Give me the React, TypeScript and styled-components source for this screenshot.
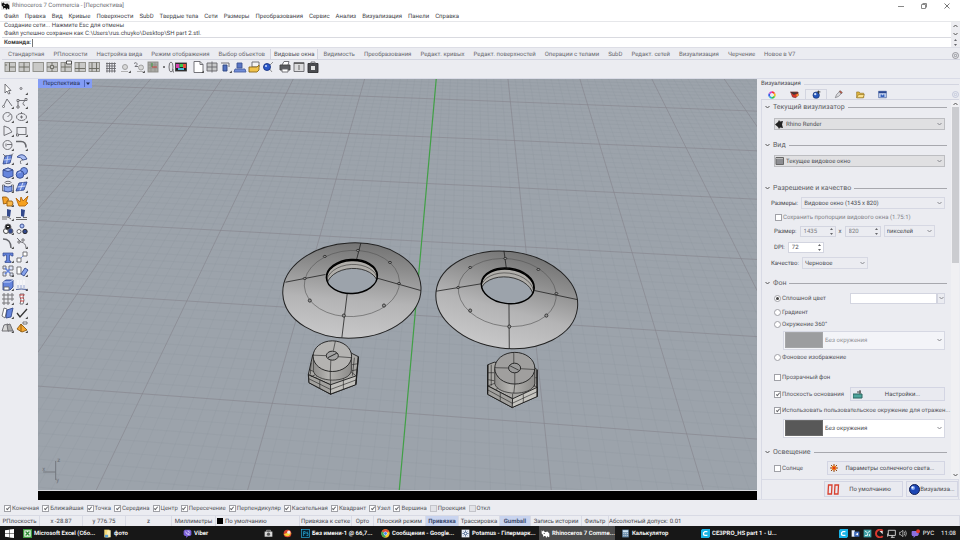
import React from "react";
import styled, { createGlobalStyle, css } from "styled-components";

const Global = createGlobalStyle`
  *, *::before, *::after { box-sizing: border-box; }
  body { margin: 0; background: #ebecf1; text-rendering: geometricPrecision; }
  body, button, input, select {
    font-family: Roboto, "Open Sans", sans-serif;
    font-size: 6px;
    line-height: 9px;
    color: #45464c;
  }
  button, input, select { margin: 0; padding: 0; border: 0; background: none; border-radius: 0; min-width: 0; text-rendering: inherit; }
  svg { display: block; flex: none; }
`;

/* ---------- frame ---------- */

const Page = styled.div`
  display: flex;
  flex-direction: column;
  min-height: 100vh;
  background: #ebecf1;
  white-space: nowrap;
  overflow: hidden;
`;

const TitleBar = styled.header`
  display: flex;
  align-items: center;
  height: 11px;
  padding: 0 8px 0 1px;
  gap: 2px;
  background: #fff;
  color: #6c6d72;
`;

const WindowButtons = styled.div`
  display: flex;
  gap: 13px;
  margin-left: auto;
`;

const WindowButton = styled.button`
  display: grid;
  place-items: center;
  width: 10px;
  height: 10px;
`;

const MenuBar = styled.nav`
  display: flex;
  align-items: center;
  height: 11px;
  padding: 0 4px;
  gap: 6px;
  background: #fff;
  border-bottom: 1px solid #e6e7ea;
`;

const MenuItem = styled.button`
  color: #404146;
`;

const CommandArea = styled.section`
  display: grid;
  grid-template-columns: 1fr 9px;
  background: #fff;
  border-bottom: 1px solid #dddee6;
  padding-left: 2px;
`;

const History = styled.div`
  height: 16px;
  padding-left: 2px;
  line-height: 8px;
  border-bottom: 1px solid #d9dae0;
`;

const CommandLine = styled.label`
  display: flex;
  align-items: center;
  height: 9px;
  padding-left: 2px;
  font-weight: 700;
  color: #444;
`;

const CommandInput = styled.input`
  flex: 1;
  height: 8px;
  margin-left: 1px;
  border-left: 1px solid #777;
  outline: none;
`;

const ArrowStack = styled.div`
  display: flex;
  flex-direction: column;
  justify-content: space-around;
  align-items: center;
  background: #ededf1;
`;

const TabStrip = styled.nav`
  display: flex;
  align-items: flex-end;
  height: 12px;
  margin-left: 2px;
  padding: 0 1px 0 6px;
  border-bottom: 1px solid #d3d5e0;
`;

const ToolTab = styled.button<{ $active?: boolean }>`
  height: 10px;
  margin-right: 9px;
  color: #66676d;
  ${(p) =>
    p.$active &&
    css`
      color: #4c4d53;
      background: #f1f1f5;
      box-shadow: -3px 0 #f1f1f5, 3px 0 #f1f1f5, 4px 0 #d3d5e0, -4px 0 #d3d5e0;
    `}
`;

const GearButton = styled.button`
  margin-left: auto;
`;

const Toolbar = styled.div`
  display: flex;
  align-items: flex-start;
  height: 19px;
  padding: 0 3px;
  border-bottom: 1px solid #d9dbe6;
`;

const ToolGroup = styled.div`
  display: flex;
  & + & {
    margin-left: 3px;
  }
`;

const ToolButton = styled.button<{ $narrow?: boolean }>`
  display: grid;
  place-content: center;
  overflow: hidden;
  width: ${(p) => (p.$narrow ? 7 : 14)}px;
  height: 14px;
`;

const Workspace = styled.main`
  display: flex;
  flex: 1;
`;

const SideTools = styled.aside`
  display: grid;
  grid-template-columns: 14px 14px;
  grid-auto-rows: 14px;
  align-content: start;
  width: 38px;
  padding: 3px 1px;
`;

const ViewportFrame = styled.section`
  position: relative;
  display: flex;
  flex-direction: column;
  flex: 1;
  min-width: 0;
  background: #000;
  margin-bottom: 1px;
`;

const Scene = styled.svg`
  width: 100%;
  flex: 1;
  min-height: 0;
  height: 410px;
  background: #9ca3ab;
  border-bottom: 1px solid #d8dade;
`;

const BlackStrip = styled.div`
  height: 9px;
  background: #000;
`;

const ViewportTab = styled.button`
  position: absolute;
  top: 0;
  left: 0;
  display: flex;
  align-items: center;
  gap: 4px;
  height: 9px;
  padding: 0 2px 0 5px;
  background: #839cf5;
  color: #27304f;
`;

/* ---------- properties panel ---------- */

const Panel = styled.aside`
  display: flex;
  flex-direction: column;
  width: 203px;
  padding: 0 1px 0 4px;
  margin-bottom: 1px;
  border-bottom: 1px solid #dcdee8;
`;

const PanelTitle = styled.h2`
  display: flex;
  align-items: center;
  gap: 3px;
  margin: 0;
  font-size: 6px;
  font-weight: 400;
  line-height: 10px;
  &::after {
    content: "";
    flex: 1;
    border-top: 1px solid #d3d5e0;
  }
`;

const PanelTabs = styled.nav`
  display: flex;
  height: 11px;
  border-bottom: 1px solid #d3d5e0;
`;

const PanelTab = styled.button<{ $active?: boolean }>`
  display: grid;
  place-items: center;
  width: 22px;
  border: 1px solid ${(p) => (p.$active ? "#d3d5e0" : "transparent")};
  border-bottom: 0;
`;

const PanelBody = styled.div`
  display: flex;
  border-left: 1px solid #d8dae5;
`;

const Form = styled.form`
  flex: 1;
  min-width: 0;
  padding: 0 4px 0 3px;
  height: 379px;
  overflow: hidden;
`;

const Section = styled.h3<{ $gap?: number }>`
  display: flex;
  align-items: center;
  gap: 3px;
  height: 14px;
  margin: ${(p) => p.$gap ?? 0}px 0 0;
  font-size: 7px;
  font-weight: 400;
  color: #5c5d63;
  &::after {
    content: "";
    flex: 1;
    border-top: 1px solid #a7a8ae;
  }
`;

const Row = styled.div<{ $h?: number; $indent?: number; $gap?: number }>`
  display: flex;
  align-items: center;
  gap: 3px;
  height: ${(p) => p.$h ?? 16}px;
  margin-top: ${(p) => p.$gap ?? 0}px;
  padding-left: ${(p) => p.$indent ?? 9}px;
  padding-right: 2px;
`;

const SelectBox = styled.span<{ $tone?: "grey" | "white" | "dim"; $w?: number; $tall?: boolean }>`
  display: grid;
  align-items: center;
  flex: ${(p) => (p.$w ? `0 0 ${p.$w}px` : "1")};
  min-width: 0;
  height: ${(p) => (p.$tall ? 19 : 12)}px;
  border: 1px solid ${(p) => (p.$tone === "grey" ? "#bcbdc1" : "#d6d8e3")};
  background: ${(p) =>
    p.$tone === "grey" ? "#e0e0e2" : p.$tone === "white" ? "#fff" : p.$tone === "dim" ? "#f3f4f8" : "#ebecf1"};
  color: ${(p) => (p.$tone === "dim" ? "#909197" : "#4c4d53")};
  & > * {
    grid-row: 1;
    grid-column: 1;
  }
  & > svg:last-child {
    justify-self: end;
    margin-right: 2px;
    pointer-events: none;
  }
`;

const NativeSelect = styled.select<{ $pad?: number }>`
  appearance: none;
  width: 100%;
  height: 100%;
  padding-left: ${(p) => p.$pad ?? 2}px;
  color: inherit;
  opacity: 1;
  outline: none;
`;

const Swatch = styled.span<{ $dark?: boolean }>`
  width: 38px;
  height: 16px;
  margin-left: 1px;
  background: ${(p) => (p.$dark ? "#585858" : "#9c9d9f")};
  border: 1px solid ${(p) => (p.$dark ? "#6a6a6a" : "#a5a6a8")};
`;

const Spin = styled.span<{ $white?: boolean }>`
  display: flex;
  align-items: center;
  width: 36px;
  min-width: 0;
  height: 11px;
  padding-right: 1px;
  border: 1px solid #d3d5e0;
  background: ${(p) => (p.$white ? "#fff" : "#ebecf1")};
  color: ${(p) => (p.$white ? "#4c4d53" : "#7b7c82")};
  input {
    flex: 1;
    width: 20px;
    height: 9px;
    padding-left: 3px;
    color: inherit;
    outline: none;
  }
`;

const ColorField = styled.input`
  flex: 1;
  height: 11px;
  background: #fff;
  border: 1px solid #d3d5e0;
  outline: none;
`;

const ColorArrow = styled.button`
  display: grid;
  place-items: center;
  width: 8px;
  height: 11px;
  margin-left: -3px;
  border: 1px solid #d3d5e0;
`;

const Choice = styled.label<{ $muted?: boolean; $w?: number }>`
  display: flex;
  align-items: center;
  gap: 1px;
  flex: 0 0 ${(p) => (p.$w ? `${p.$w}px` : "auto")};
  color: ${(p) => (p.$muted ? "#818288" : "#54555b")};
`;

const Tick = styled.input`
  appearance: none;
  display: grid;
  place-items: center;
  flex: none;
  width: 7px;
  height: 7px;
  background: #fff;
  border: 1px solid #a0a1a7;
  &:checked::after {
    content: "";
    width: 2px;
    height: 4px;
    border: solid #66676c;
    border-width: 0 1px 1px 0;
    transform: rotate(40deg);
  }
  &:disabled {
    background: #e2e3e8;
    border-color: #c3c4ca;
  }
  &[type="radio"] {
    border-radius: 50%;
  }
  &[type="radio"]:checked::after {
    width: 3px;
    height: 3px;
    border: 0;
    border-radius: 50%;
    background: #444;
    transform: none;
  }
`;

const PushButton = styled.button<{ $w?: number; $h?: number }>`
  display: flex;
  align-items: center;
  flex: ${(p) => (p.$w ? `0 0 ${p.$w}px` : "1")};
  height: ${(p) => p.$h ?? 14}px;
  padding: 0 2px;
  border: 1px solid #d3d5e3;
  background: #e9eaf0;
  span {
    flex: 1;
    text-align: center;
  }
`;

const Scrollbar = styled.div`
  display: flex;
  flex-direction: column;
  align-items: center;
  width: 8px;
  padding: 2px 0;
  background: #f0f0f3;
  button:last-child {
    margin-top: auto;
  }
`;

const Thumb = styled.div`
  width: 7px;
  height: 156px;
  margin-top: 1px;
  background: #cbccd0;
`;

const PanelFooter = styled.footer`
  display: flex;
  justify-content: flex-end;
  gap: 3px;
  padding: 1px 0 2px;
  border: 1px solid #d8dae5;
  border-bottom: 0;
`;

/* ---------- bottom bars ---------- */

const SnapBar = styled.div`
  display: flex;
  align-items: center;
  gap: 3px;
  height: 15px;
  padding-left: 4px;
  border-bottom: 1px solid #d8dae4;
`;

const StatusBar = styled.div`
  display: grid;
  grid-template-columns: 40px 43px 43px 46px 44px 84px 52px 22px 52px 33px 41px 31px 51px 27px 1fr;
  height: 10px;
`;

const StatusCell = styled.span<{ $on?: boolean; $start?: boolean }>`
  display: flex;
  align-items: center;
  justify-content: ${(p) => (p.$start ? "flex-start" : "center")};
  border-right: 1px solid #d8dae4;
  ${(p) =>
    p.$on &&
    css`
      background: #c9d4ef;
      font-weight: 700;
      color: #3c4a6e;
    `}
`;

const LayerChip = styled.i`
  width: 6px;
  height: 6px;
  margin: 0 2px 0 1px;
  background: #000;
`;

const Taskbar = styled.footer`
  display: flex;
  align-items: stretch;
  height: 15px;
  background: #171717;
`;

const TaskApps = styled.div`
  display: flex;
  gap: 4px;
  padding-left: 3px;
`;

const StartButton = styled.button`
  display: grid;
  place-items: center;
  width: 18px;
`;

const TaskButton = styled.button<{ $active?: boolean; $icon?: boolean }>`
  display: flex;
  align-items: center;
  justify-content: ${(p) => (p.$icon ? "center" : "flex-start")};
  gap: 2px;
  width: ${(p) => (p.$icon ? 15 : 76)}px;
  padding: 0 2px;
  color: #fff;
  font-weight: 600;
  border-bottom: 1px solid ${(p) => (p.$icon ? "transparent" : "#85888d")};
  background: ${(p) => (p.$active ? "#4b4b4b" : "transparent")};
`;

const Tray = styled.div`
  display: flex;
  align-items: center;
  gap: 3px;
  margin-left: auto;
  padding-right: 4px;
  color: #fff;
`;

const Clock = styled.time`
  padding-left: 4px;
`;

/* ---------- drawings ---------- */

const Ico = ({ s = 14, children }: { s?: number; children: React.ReactNode }) => (
  <svg width={s} height={s} viewBox="0 0 14 14" fill="none" stroke="#66676c" strokeWidth=".9">
    {children}
  </svg>
);

const Chevron = ({ up = false, dark = false }: { up?: boolean; dark?: boolean }) => (
  <svg width="5" height="4" viewBox="0 0 5 4" fill="none" stroke={dark ? "#555" : "#88898f"}>
    <path d={up ? "M.5 3 2.5 1l2 2" : "M.5 1l2 2 2-2"} />
  </svg>
);

const SpinArrows = () => (
  <svg width="5" height="9" viewBox="0 0 5 9" fill="#66676c">
    <path d="M1 3 2.500 1 4 3ZM1 6l1.500 2L4 6Z" />
  </svg>
);

const Gear = ({ c = "#808188" }: { c?: string }) => (
  <svg width="7" height="7" viewBox="0 0 7 7" fill="none" stroke={c} strokeWidth=".8">
    <circle cx="3.500" cy="3.500" r="3" />
    <circle cx="3.500" cy="3.500" r="1.200" />
  </svg>
);

const corner = <path d="M12.800 10.500v2.500h-2.500z" fill="#444" stroke="none" />;

const Pane = ({ d, extra }: { d?: string; extra?: React.ReactNode }) => (
  <Ico>
    <rect x="2" y="2.500" width="10.500" height="9" fill="#c9c9c7" stroke="#8a8a85" />
    {d && <path d={d} stroke="#66665f" />}
    {extra}
  </Ico>
);

const toolGroups: { narrow?: boolean; label: string; icon: React.ReactNode }[][] = [
  [
    { label: "Четыре вида", icon: <Pane d="M6.500 2.500v9M6.500 7H12M2 5h2" /> },
    { label: "Разделить", icon: <Pane d="M7 2.500v9M2 7h10" /> },
    { label: "Развернуть", icon: <Pane /> },
    { label: "Центр", icon: <Pane d="M7 2.500v2.500M7 9v2.500M2 7h3M9 7h3M5.500 5.500h3v3h-3z" /> },
    { label: "Новый вид", icon: <Pane d="M6 2.500v9M2 7h10" extra={<path d="M7.500 1h5v3h-5z" fill="#fff" stroke="#444" />} /> },
    { label: "Разделить по горизонтали", icon: <Pane d="M6 2.500v9M2 8.500h10" /> },
    { label: "Разделить по вертикали", icon: <Pane d="M5 2.500v9M9.500 2.500v9M2 8.500h10" /> },
  ],
  [
    { label: "Сетка", icon: <Ico><path d="M2 3.500h10M2 6h10M2 8.500h10M2 11h10M3 2.500v10M5.500 2.500v10M8 2.500v10M10.500 2.500v10" stroke="#6b6c70" /></Ico> },
    { label: "Камера", icon: <Ico><circle cx="7" cy="7" r="2.500" fill="#d8d8d8" stroke="#999" /><path d="M3 11.500h7" stroke="#aaa" />{corner}</Ico> },
    { label: "Две камеры", icon: <Ico><path d="M2 3.500q3-2 3 1L3 6.500h3" /><circle cx="9" cy="7.500" r="2.500" fill="#d8d8d8" stroke="#999" /><path d="M5 11.500h6" stroke="#aaa" />{corner}</Ico> },
    { label: "РПлоскость", icon: <Ico><rect x="2" y="2" width="10" height="10" fill="#a9a9a4" stroke="#8b8b86" /><path d="M2 5h10M2 8h10M5 2v10M9 2v10" stroke="#92928d" /><path d="M6 7V3" stroke="#2f9a35" /><path d="M6 7h5" stroke="#c33" /></Ico> },
    { narrow: true, label: "Точка", icon: <Ico><circle cx="7" cy="7" r="1" fill="#555" stroke="none" /></Ico> },
    { narrow: true, label: "Линза", icon: <Ico><ellipse cx="7" cy="7" rx="2" ry="5" fill="#e3e4e6" /><path d="M9 9v3h1" /></Ico> },
    { label: "Фон", icon: <Ico><rect x="1.500" y="3" width="11" height="8" fill="#222" stroke="#444" /><path d="M2 4h3.500v4H2z" fill="#d33fae" stroke="none" /><path d="M5.500 4h3.500v3H5.500z" fill="#3cc84d" stroke="none" /><path d="M9 4h3v4H9z" fill="#e84b3a" stroke="none" /><path d="M4 8h6v2H4z" fill="#48b7d8" stroke="none" /></Ico> },
  ],
  [
    { label: "Новый лист", icon: <Ico><path d="M3 1.500h6l3 3v8H3z" fill="#fff" /><path d="M9 1.500v3h3" />{corner}</Ico> },
    { label: "Глобус", icon: <Ico><path d="M2 3h10v8H2zM2 7h10M7 1.500v11" fill="#c7c8c9" /></Ico> },
    { label: "Вырезать", icon: <Ico><path d="M2 3h8M10 3v4" /><path d="M4 5h4v6H4z" fill="#5271bf" stroke="#2d4580" />{corner}</Ico> },
    { label: "Слой", icon: <Ico><path d="M4 3h5v5H4z" fill="#5a76c4" stroke="#3c5594" /><path d="M2 9h10l1 3H1z" fill="#6f8cd8" stroke="#4a60a0" /></Ico> },
    { label: "Открыть", icon: <Ico><path d="M5 2h7v5H5z" fill="#f4f4f4" /><path d="M2 7h8l2-2v5l-2 2H2z" fill="#f0c24b" stroke="#8a6a1c" /></Ico> },
    { label: "Цель", icon: <Ico><path d="M7 7l5-5M7 7l4 5" stroke="#888" /><circle cx="6" cy="7" r="3.500" fill="#2b58c9" stroke="#1b3681" /><circle cx="5" cy="6" r="1" fill="#cfe0ff" stroke="none" /></Ico> },
  ],
  [
    { label: "Печать", icon: <Ico><path d="M4 5 6 1.500h5L10 5" fill="#fff" /><path d="M2 5h10v5H2z" fill="#5a5b5f" stroke="#444" /><path d="M4 9h6v3H4z" fill="#fff" /></Ico> },
    { label: "Свойства", icon: <Ico><path d="M2 2.500h10v9H2z" fill="#dcdcde" /><path d="M2 3.500h10" stroke="#555" /><path d="M7 5v5" stroke="#555" /></Ico> },
    { label: "Инструменты", icon: <Ico><path d="M2 3.500h10v9H2z" fill="#4b4c50" stroke="#2f3033" /><path d="M5 4V2h4v2" /><path d="M5 6h4v4H5z" fill="#e3e3e3" stroke="none" /></Ico> },
  ],
];

const B = "#6484dc";
const BD = "#33498c";
const sideIcons: [string, React.ReactNode][] = [
  ["Выбор", <path d="M4 2v9l2-2 1.500 3L9 11.500 7.500 8.500H10z" fill="#fff" />],
  ["Точка", <><circle cx="6" cy="6.500" r="1" />{corner}</>],
  ["Полилиния", <><path d="M2 11 6 3l5 7" /><circle cx="2.500" cy="10.500" r="1" fill="#fff" />{corner}</>],
  ["Кривая", <><path d="M3 11V4.500h7q-4 4 0 5" /><path d="M2 3.500h2v2H2zM10 2.500h2v2h-2zM2 10h2v2H2z" fill="#fff" />{corner}</>],
  ["Окружность", <><circle cx="6.500" cy="7" r="4.500" /><path d="m6.500 7 3-3" />{corner}</>],
  ["Эллипс", <><ellipse cx="6.500" cy="7" rx="5" ry="3.500" /><path d="M5 7h3M6.500 5.500v3M6.500 2v2" />{corner}</>],
  ["Дуга", <><path d="M3 2v9.500L11 8Q9 3 3 2" />{corner}</>],
  ["Прямоугольник", <><rect x="2" y="3.500" width="9" height="7" /><path d="M1.500 10h2v2h-2z" fill="#fff" />{corner}</>],
  ["Многоугольник", <><circle cx="6.500" cy="7" r="4.500" /><path d="M6 6.500h5M5 5.500v3" />{corner}</>],
  ["Скругление", <><path d="M1 3.500h5q5 0 5 6" strokeWidth="1.500" />{corner}</>],
  ["Поверхность", <><path d="m4 4 7-1-2 8-7 1z" fill={B} stroke={BD} /><path d="m3 8 7-1M7 3.500 5.500 11.500" stroke="#cdd8f5" /><path d="M2 2l3 3M12 1.500 10 4" />{corner}</>],
  ["Выдавить", <><path d="M2 5q4-4 8-1l2 3-4 1Q6 5 2 5" fill="#a9bdf3" stroke={BD} /><path d="M8 8q-4 0-2 4" />{corner}</>],
  ["Ящик", <><path d="m2 4 5-2 5 2v6l-5 2-5-2z" fill={B} stroke={BD} /><path d="m2 4 5 1.500L12 4 7 2z" fill="#a9bdf3" stroke={BD} />{corner}</>],
  ["Сферы", <><circle cx="9" cy="5" r="3.500" fill="#7d9bea" stroke={BD} /><circle cx="5" cy="8.500" r="3.800" fill={B} stroke={BD} /><path d="M3 7.500q1-2 3-1.500" stroke="#d3defa" />{corner}</>],
  ["Цилиндр", <><ellipse cx="7" cy="2.500" rx="3" ry="1.200" /><path d="M1.500 5h2v6h-2zM10.500 5h2v6h-2z" fill="#fff" /><path d="M3 6q4 2 8 0v5q-4 2-8 0z" fill="#88a4ea" stroke={BD} />{corner}</>],
  ["Сетка", <><path d="m4 3 8-1-3 8-8 1z" fill={B} stroke={BD} /><path d="m2.500 7 8-1M8 2.500 5 10.500" stroke="#e2e9fc" />{corner}</>],
  ["Объединить", <><path d="M1.500 3h4l2 2-1 4-4 1z" fill="#f5a32b" stroke="#9b5c0b" /><path d="M6 7h5l1 2-1 3H6z" fill="#f7b84a" stroke="#9b5c0b" />{corner}</>],
  ["Взорвать", <path d="M1 4l4 4 1-5 2 4 5-5-2 6 2 1-3 3H4z" fill="#f5a01f" stroke="#b5670a" />],
  ["Обрезать", <><path d="M6 1l4 1-1 7-3-1z" fill={BD} stroke="none" /><path d="M1 9h6l3 2" stroke="#555" /><path d="M1 11h5" />{corner}</>],
  ["Разделить", <><path d="M6 1l4 1-1 7-3-1z" fill={BD} stroke="none" /><path d="M1 9.500h5M8 9.500h4M1 11.500h11" stroke="#555" /></>],
  ["Группа", <><circle cx="5" cy="9" r="2.500" fill="#fff" stroke="#333" /><circle cx="7" cy="5" r="3" fill="#222" /><circle cx="9.500" cy="9" r="2.500" fill={BD} /><path d="M6 4.500h2" stroke="#fff" />{corner}</>],
  ["Разгруппировать", <><circle cx="7" cy="4" r="2" fill="#a9bdf3" stroke={BD} /><circle cx="4" cy="9.500" r="2" fill="#fff" /><circle cx="10" cy="9.500" r="2.200" fill={BD} stroke="#222" /></>],
  ["Продлить", <><path d="M2 3q8 0 8 9" strokeWidth="1.400" />{corner}</>],
  ["Сопряжение", <><path d="M2 2l4 4q5 1 5 6" /><path d="M3 5h2v2H3zM7 3h2v2H7z" fill="#fff" />{corner}</>],
  ["Текст", <><path d="M2 3h10v3h-1.500L10 5H8.500v6H10v1.500H4V11h1.500V5H4l-.5 1H2z" fill={B} stroke={BD} strokeWidth=".7" />{corner}</>],
  ["Переместить", <><path d="M8 2h4v4H8zM2 8h4v4H2z" fill="#fff" /><path d="m6 8 2-2" stroke={B} />{corner}</>],
  ["Блок", <><path d="M2 2h3v3H2zM8 2h4v4H8zM2 8h3v4H2zM9 9h3v3H9z" fill="#dfe6fa" /><path d="m4 4 5 5M9 5 4 10" stroke={B} strokeWidth="1.500" />{corner}</>],
  ["Повернуть", <><path d="M2 3h4v7H2z" fill="#fff" /><path d="m6 10 4-6 3 2-4 6z" fill="#87a3ec" stroke={BD} />{corner}</>],
  ["Булевы", <><path d="m2 4 3-2h7v7l-3 3H2z" fill={B} stroke={BD} /><path d="m2 4h7l3-2" stroke="#d3defa" /><path d="M3 9h5v3H3z" fill="#fff" />{corner}</>],
  ["Проекция", <><path d="M3 2v8M6 2v8M9 2v8" stroke="#fff" /><path d="M3 7v3M6 7v3M9 7v3" stroke="#8c9dcd" /><path d="M1 11.500q5-1 11 0" stroke={BD} />{corner}</>],
  ["Массив", <><path d="M2 2h2v2H2zM6 2h2v2H6zM10 2h2v2h-2zM2 6h2v2H2zM6 6h2v2H6zM10 6h2v2h-2zM2 10h2v2H2zM6 10h2v2H6z" fill="#fff" />{corner}</>],
  ["Анализ", <><path d="M5 2h4L8 5l1 3-1 4H5l1-4-1-3z" fill="#fff" /><path d="M4.500 3h5M5 6h4M5 9h4" stroke="#c33" />{corner}</>],
  ["Слои", <><path d="m3 2 3 1-2 9-3-2z" fill="#fff" /><path d="m6 4 6-2-2 9-5 1z" fill={B} stroke={BD} />{corner}</>],
  ["Проверка", <><path d="m2 7 3 4 7-8" stroke="#333" strokeWidth="1.300" />{corner}</>],
  ["Скрыть", <><path d="M1 11l2-6 4-1 1 7z" fill="#d9d9d9" /><path d="M6 5l3-1 3 7H7z" fill="#aaa" />{corner}</>],
  ["Визуализация", <><path d="m6 4 6 6-5 2-5-3z" fill="#f4a733" stroke="#8f5b0e" /><path d="M6 4V12" stroke="#8f5b0e" /><path d="M8 2h4v2H8z" fill="#fff" />{corner}</>],
];

/* Perspective mapping of the construction plane onto the viewport. */
type Pt = [number, number];
const quad: Pt[] = [
  [269, 130],
  [599, 144],
  [686, 433],
  [143, 393],
];
const project = (() => {
  const [[x0, y0], [x1, y1], [x2, y2], [x3, y3]] = quad;
  const dx1 = x1 - x2, dx2 = x3 - x2, dx3 = x0 - x1 + x2 - x3;
  const dy1 = y1 - y2, dy2 = y3 - y2, dy3 = y0 - y1 + y2 - y3;
  const det = dx1 * dy2 - dx2 * dy1;
  const g = (dx3 * dy2 - dx2 * dy3) / det;
  const h = (dx1 * dy3 - dx3 * dy1) / det;
  return (u: number, v: number): Pt => {
    const s = (u + 2) / 4;
    const t = (v - 1) / 4;
    const w = g * s + h * t + 1;
    return [
      ((x1 - x0 + g * x1) * s + (x3 - x0 + h * x3) * t + x0) / w,
      ((y1 - y0 + g * y1) * s + (y3 - y0 + h * y3) * t + y0) / w,
    ];
  };
})();
const segment = (a: Pt, b: Pt) => `M${a[0].toFixed(1)} ${a[1].toFixed(1)}L${b[0].toFixed(1)} ${b[1].toFixed(1)}`;
const gridPath = (major: boolean) => {
  const parts: string[] = [];
  for (let i = -80; i <= 80; i++) {
    if ((i % 10 === 0) === major && i !== 0) parts.push(segment(project(i / 10, -1), project(i / 10, 8)));
    if (i >= -10 && (i % 10 === 0) === major) parts.push(segment(project(-8, i / 10), project(8, i / 10)));
  }
  return parts.join("");
};
const axisPath = segment(project(0, -1), project(0, 8));

type DiscProps = {
  id: string;
  c: Pt; r: Pt; rot: number;
  ring: Pt; ringR: Pt;
  hole: Pt; holeR: Pt;
  seams: string;
  bolts: Pt[];
};

const Disc = ({ id, c, r, rot, ring, ringR, hole, holeR, seams, bolts }: DiscProps) => {
  const tilt = `rotate(${rot} ${hole[0]} ${hole[1]})`;
  return (
    <g fill="none" stroke="#222">
      <clipPath id={`${id}-hole`}>
        <ellipse cx={hole[0]} cy={hole[1]} rx={holeR[0]} ry={holeR[1]} transform={tilt} />
      </clipPath>
      <ellipse cx={c[0]} cy={c[1]} rx={r[0]} ry={r[1]} transform={`rotate(${rot} ${c[0]} ${c[1]})`} fill="url(#steel)" />
      <ellipse cx={ring[0]} cy={ring[1]} rx={ringR[0]} ry={ringR[1]} transform={`rotate(${rot} ${ring[0]} ${ring[1]})`} stroke="#555" strokeWidth=".6" />
      <path d={seams} strokeWidth=".8" />
      <g clipPath={`url(#${id}-hole)`}>
        <rect x={hole[0] - 30} y={hole[1] - 20} width="60" height="40" fill="#b0aeaa" stroke="none" />
        <ellipse cx={hole[0]} cy={hole[1] + 1} rx={holeR[0]} ry={holeR[1]} transform={tilt} stroke="#000" strokeWidth="1.600" />
        <ellipse cx={hole[0]} cy={hole[1] + 5} rx={holeR[0]} ry={holeR[1]} transform={tilt} strokeWidth=".5" />
        <ellipse cx={hole[0]} cy={hole[1] + 9} rx={holeR[0]} ry={holeR[1]} transform={tilt} fill="#9ca3ab" strokeWidth=".8" />
      </g>
      <ellipse cx={hole[0]} cy={hole[1]} rx={holeR[0]} ry={holeR[1]} transform={tilt} stroke="#000" strokeWidth="1.400" />
      {bolts.map(([x, y]) => (
        <ellipse key={`${x}-${y}`} cx={x} cy={y} rx="1.500" ry={y > hole[1] + 15 ? 1.6 : 1} fill="#999" strokeWidth=".8" />
      ))}
    </g>
  );
};

const SceneDrawing = () => (
  <Scene viewBox="38 79 719 410" preserveAspectRatio="xMidYMid slice" role="img" aria-label="Перспектива">
    <defs>
      <linearGradient id="steel" x1=".6" y1="0" x2=".4" y2="1">
        <stop offset="0" stopColor="#737373" />
        <stop offset=".25" stopColor="#8c8c8c" />
        <stop offset=".6" stopColor="#b4b4b5" />
        <stop offset="1" stopColor="#c8c8c9" />
      </linearGradient>
      <linearGradient id="barrel" x1="0" x2="1">
        <stop offset="0" stopColor="#8e8d8b" />
        <stop offset=".4" stopColor="#b5b4b1" />
        <stop offset="1" stopColor="#8b8a88" />
      </linearGradient>
    </defs>
    <path d={gridPath(false)} stroke="#8b939c" strokeOpacity=".4" strokeWidth=".6" />
    <path d={gridPath(true)} stroke="#85838b" strokeOpacity=".75" strokeWidth=".8" />
    <path d={axisPath} stroke="#41a046" strokeWidth="1.200" />
    <Disc
      id="left"
      c={[352, 290]} r={[69, 47.5]} rot={-3}
      ring={[352, 283]} ringR={[47.5, 33]}
      hole={[352, 276]} holeR={[25.5, 17]}
      seams="M361 242.500 356.700 259M285.700 281.700 325.700 274M377.300 277.700 420.700 290M347.300 293.300 342 337"
      bolts={[[310, 300], [305, 278], [325, 256], [358, 250], [390, 262], [399, 283], [384, 305], [344, 315]]}
    />
    <Disc
      id="right"
      c={[506.5, 299.3]} r={[71, 48.3]} rot={7}
      ring={[507, 292]} ringR={[49, 33.7]}
      hole={[507.5, 285.3]} holeR={[26.5, 17.7]}
      seams="M503.700 250.300 506 267.300M436 290.700 481 283.300M534 290 576.700 299M508.700 303.300 509 348"
      bolts={[[470, 267], [505, 258], [538, 269], [556, 293], [546, 315], [509, 326], [470, 310], [458, 287]]}
    />
    <g stroke="#1c1c1c" strokeWidth=".9" fill="none" strokeLinejoin="round">
      <path d="M313 354 308.500 374l.7 8 21.500 11.500 25-9.500L358.500 356l-7-3.500Z" fill="#a9a8a5" />
      <path d="m308.700 374 22 10 26-9-1 9-25 9.300z" fill="#c1c0bc" />
      <path d="m308.700 374 .5 8 21.500 11.300V384z" fill="#a2a19e" />
      <path d="m309 378 21.700 10.700 25.500-9.500M320 379.500v8M343.500 379.500v9M311.500 362l-1 12M354.500 357l-2 18M309.500 369l5 2M352 364l6-1M352 370l5-1M311 376l9-4M330.700 384v-5M356 375l-5-4M316 377l3-3M344 379l-2-3" strokeWidth=".6" />
      <path d="M313.500 356v14c2 12 36 13 38 0v-14z" fill="url(#barrel)" strokeWidth=".7" />
      <ellipse cx="332.500" cy="355.500" rx="19.200" ry="15.300" fill="#b4b3b1" />
      <path d="M335.500 340.500 333.500 350M313.500 354.500l13 .5M338.500 356l13 1M331 359.500l-.5 11.500v8" strokeWidth=".6" />
      <ellipse cx="332.500" cy="355" rx="6" ry="4.500" fill="#a3a3a3" />
      <path d="m328 357 9-4.500" />
      <path d="M358.500 356 356 384" strokeWidth="1.200" />
    </g>
    <g stroke="#1c1c1c" strokeWidth=".9" fill="none" strokeLinejoin="round">
      <path d="M494 361.500 487.700 364l-.3 29.500 24.500 13.200 24.700-11V369l-2-2Z" fill="#a9a8a5" />
      <path d="m487.300 385 25 13 24.700-11.500v9.200l-25 11z" fill="#c6c5c0" />
      <path d="m487.300 385v8.500l24.600 13.200.4-8.700z" fill="#a2a19e" />
      <path d="m487.300 389 24.700 13.500 24.700-11.500M500 392v8M523 393.500v8.500M491 364v21M534 371v15M488 372h6M488 379l6 1M535 377h2M488 385l8-3M512.300 398v-5M537 386.500l-6-3M496 389l2-3M525 392l-1-3" strokeWidth=".6" />
      <path d="M494.500 368v15c3 12 37 13 40 0v-15z" fill="url(#barrel)" strokeWidth=".7" />
      <ellipse cx="514.500" cy="367.500" rx="20" ry="15.800" fill="#a09f9e" />
      <path d="M513.500 352v10.500M494.500 367l13.500.3M520.500 368l14 .8M514.500 372v11.500l-1 9" strokeWidth=".6" />
      <ellipse cx="514.300" cy="367.300" rx="6" ry="4.800" fill="#999" />
      <path d="m509.500 365 9 4.500" strokeWidth=".7" />
      <path d="M487.500 364v29M536.800 369v27" strokeWidth="1.200" />
    </g>
    <path d="M44 471h12.500M56.500 460v19" stroke="#74787f" />
    <g fill="#6c7077" fontSize="6" fontFamily="Roboto, sans-serif">
      <text x="43" y="470">x</text>
      <text x="58" y="461">z</text>
      <text x="57" y="481">y</text>
    </g>
  </Scene>
);

const RhinoMark = ({ light = false }: { light?: boolean }) => (
  <svg width="9" height="9" viewBox="0 0 14 14">
    {!light && <rect width="14" height="14" fill="#e8e8e8" />}
    <path
      d="M1 2l2 2 1-2 2 3 4-1 3 3v5l-2 1-1-2-2 3-1-3H5l-1 2-1-4-2-2z"
      fill={light ? "#fff" : "#111"}
    />
    <circle cx="5" cy="7" r=".9" fill={light ? "#333" : "#fff"} />
  </svg>
);

const panelTabs: [string, React.ReactNode][] = [
  ["Свойства", <svg width="8" height="8" viewBox="0 0 14 14" fill="none" strokeWidth="3"><path d="M7 2a5 5 0 0 1 4.300 2.500" stroke="#f33" /><path d="M11.300 4.500a5 5 0 0 1 0 5" stroke="#f6c21b" /><path d="M11.300 9.500A5 5 0 0 1 7 12" stroke="#3cc447" /><path d="M7 12a5 5 0 0 1-4.300-2.500" stroke="#22b6cf" /><path d="M2.700 9.500a5 5 0 0 1 0-5" stroke="#355be8" /><path d="M2.700 4.500A5 5 0 0 1 7 2" stroke="#cf3fd4" /></svg>],
  ["Материалы", <Ico s={9}><path d="M1 3h11l1 5-4 4-5-1z" fill="#d7372b" stroke="#722" /><path d="m1 3 5 4 7-3" fill="#3b3b3b" stroke="#333" /><path d="M10 7l3-1v3l-3 1z" fill="#f2a02d" stroke="none" /></Ico>],
  ["Визуализация", <Ico s={9}><circle cx="6.500" cy="8" r="5" fill="#2456bb" stroke="#152d63" /><circle cx="5" cy="6.500" r="1.800" fill="#d4e2fb" stroke="none" /><path d="M10 1v5M8 3h5" stroke="#333" strokeWidth="1.500" /></Ico>],
  ["Солнце", <Ico s={9}><path d="m2 12 2-5 5-5 3 3-5 5z" fill="#d9d9dc" /><path d="m8 2 2-1 3 3-2 2z" fill="#c2543d" /></Ico>],
  ["Библиотеки", <Ico s={9}><path d="M1 3h4l1 2h6v7H1z" fill="#e0b53e" stroke="#8a6c1b" /><path d="m1 12 3-5h9l-2 5z" fill="#fbe08a" stroke="#8a6c1b" /></Ico>],
  ["Окно", <Ico s={9}><path d="M1 2h12v10H1z" fill="#c9d7f2" stroke="#27458f" /><path d="M1 3.500h12" stroke="#27458f" strokeWidth="3" /><path d="M4 7h2l1 2 1-2h2v4H4z" fill="#3763bd" stroke="none" /></Ico>],
];

const menus = ["Файл", "Правка", "Вид", "Кривые", "Поверхности", "SubD", "Твердые тела", "Сети", "Размеры", "Преобразования", "Сервис", "Анализ", "Визуализация", "Панели", "Справка"];
const tabs = ["Стандартная", "РПлоскости", "Настройка вида", "Режим отображения", "Выбор объектов", "Видовые окна", "Видимость", "Преобразования", "Редакт. кривых", "Редакт. поверхностей", "Операции с телами", "SubD", "Редакт. сетей", "Визуализация", "Черчение", "Новое в V7"];
const snaps = ["Конечная", "Ближайшая", "Точка", "Середина", "Центр", "Пересечение", "Перпендикуляр", "Касательная", "Квадрант", "Узел", "Вершина", "Проекция", "Откл"];

const I = ({ children }: { children: React.ReactNode }) => (
  <svg width="9" height="9" viewBox="0 0 14 14" fill="none">{children}</svg>
);

const chrome = (
  <I>
    <circle cx="7" cy="7" r="6.500" fill="#f5c52b" />
    <path d="M7 7 1.400 3.700A6.500 6.500 0 0 1 12.600 3.700z" fill="#e2483a" />
    <path d="M7 7 1.400 3.700A6.500 6.500 0 0 0 7 13.500z" fill="#3ba55b" />
    <circle cx="7" cy="7" r="3" fill="#fff" />
    <circle cx="7" cy="7" r="2.300" fill="#4584ee" />
  </I>
);
const viber = (
  <I>
    <path d="M3 1h8l2 2v6l-2 2H8l-3 3v-3H3L1 9V3z" fill="#7d62d8" />
    <path d="M4 4q1 4 5 5l1-1-2-1M7 3q3 0 3 3" stroke="#fff" />
  </I>
);
const cura = (
  <I>
    <path d="M2 0h12v12l-2 2H0V2z" fill="#19b3e6" />
    <path d="M10 4H6L4 6v3l2 1h4" stroke="#fff" strokeWidth="2" />
  </I>
);

const tasks: { label: string; icon: React.ReactNode; only?: boolean; active?: boolean }[] = [
  { label: "Microsoft Excel (Сбо...", icon: <I><rect x="1" y="1" width="12" height="12" fill="#e9f5e6" stroke="#3d9a3f" strokeWidth="2" /><path d="m4 4 6 6M10 4l-6 6" stroke="#2c8a35" strokeWidth="2" /></I> },
  { label: "фото", icon: <I><path d="M2 1h8v12H2z" fill="#f6dc7a" /><path d="M7 2h5v11H5z" fill="#fbeeb0" /><path d="M3 9h5v4H3z" fill="#5ba0d0" /></I> },
  { label: "Viber", icon: viber },
  { label: "Снимок", only: true, icon: <I><rect x="1" y="4" width="12" height="8" fill="#d9d9d9" /><path d="M4 4V2h6v2" stroke="#d9d9d9" /><circle cx="7" cy="8" r="2.500" fill="#555" /></I> },
  { label: "Браузер", only: true, icon: <I><circle cx="7" cy="7" r="6" fill="#d8432f" /><path d="M1 8q6 7 12-1l-6-1z" fill="#f5cf38" /><circle cx="9" cy="5" r="2.500" fill="#f3e7e4" /></I> },
  { label: "Без имени-1 @ 66,7...", icon: <I><rect x="1" y="1" width="12" height="12" fill="#06202e" stroke="#2cb5e8" /><path d="M4 11V4h2.500v3H4M11 5H9v2h2v3H8.500" stroke="#2cb5e8" /></I> },
  { label: "Сообщения - Google...", icon: chrome },
  { label: "Potamus - Гіпермарк...", icon: <I><rect x="1" y="1" width="12" height="12" fill="#e8edf6" /><path d="M7 2v10M2 7h10M4 4l6 6M10 4l-6 6" stroke="#34517f" /><circle cx="7" cy="7" r="2" fill="#fff" stroke="#34517f" /></I> },
  { label: "Rhinoceros 7 Comme...", icon: <RhinoMark light />, active: true },
  { label: "Калькулятор", icon: <I><rect x="2" y="1" width="10" height="12" fill="#6c8fae" /><path d="M3 2h8v3H3z" fill="#cfe5f5" /><path d="M4 7h1M7 7h1M10 7h1M4 10h1M7 10h1M10 10h1" stroke="#fff" strokeWidth="1.500" /></I> },
  { label: "CE3PRO_HS part 1 - U...", icon: cura },
];

const tray: React.ReactNode[] = [
  cura,
  <I><path d="M1 2h5v10H1z" fill="#e8eefb" /><path d="M5 4h8v8H5z" fill="#3e69bb" /><path d="m7 8 4-2v4z" fill="#fff" /></I>,
  <I><rect x="1" y="1" width="12" height="12" fill="#3f9fa6" /><path d="M3 3l4 3 4-3M3 10h4v-3M10 8v3" stroke="#e2f5f5" strokeWidth="1.500" /></I>,
  <I><path d="M12 3A6 6 0 1 0 12 11" stroke="#d9392f" strokeWidth="3" /><path d="M7 3h5v5z" fill="#e8e8e8" /></I>,
  <I><path d="M2 2h11v8H2zM6 13h6M8 10v3M1 7v5" stroke="#e8e8e8" strokeWidth="1.300" /></I>,
  <I><path d="M1 5h2l3-3v10L3 9H1zM8 4q2 3 0 6M10 2.500q3 4.500 0 9" stroke="#e8e8e8" /></I>,
  <I><path d="M2 3h8l2 2v4l-2 2H7l-3 3v-3H2L1 9V4z" fill="#8b6fe0" /><circle cx="11" cy="3.500" r="3" fill="#e2392e" /></I>,
];

const Dropdown = ({ id, value, tone, w, pad, tall, lead, label }: {
  id?: string; value: string; tone?: "grey" | "white" | "dim"; w?: number; pad?: number; tall?: boolean; lead?: React.ReactNode; label?: string;
}) => (
  <SelectBox $tone={tone} $w={w} $tall={tall}>
    <NativeSelect id={id} aria-label={label} $pad={pad} disabled={tone === "dim"} defaultValue={value}>
      <option>{value}</option>
    </NativeSelect>
    {lead}
    <Chevron />
  </SelectBox>
);

const Head = ({ gap, children }: { gap?: number; children: React.ReactNode }) => (
  <Section $gap={gap}>
    <Chevron dark />
    {children}
  </Section>
);

export default function App() {
  return (
    <>
      <Global />
      <Page>
        <TitleBar>
          <RhinoMark />
          Rhinoceros 7 Commercia - [Перспектива]
          <WindowButtons>
            <WindowButton aria-label="Свернуть"><svg width="6" height="6" stroke="#888"><path d="M0 3.500h6" /></svg></WindowButton>
            <WindowButton aria-label="Восстановить"><svg width="6" height="6" fill="none" stroke="#888"><path d="M.5 1.500h4v4h-4zM1.500.5h4v4" /></svg></WindowButton>
            <WindowButton aria-label="Закрыть"><svg width="6" height="6" stroke="#777"><path d="m.5.5 5 5M5.500.5l-5 5" /></svg></WindowButton>
          </WindowButtons>
        </TitleBar>
        <MenuBar>{menus.map((m) => <MenuItem key={m}>{m}</MenuItem>)}</MenuBar>
        <CommandArea>
          <History>
            <div>Создание сети... Нажмите Esc для отмены</div>
            <div>Файл успешно сохранен как C:\Users\rus.chuyko\Desktop\SH part 2.stl.</div>
          </History>
          <ArrowStack><Chevron up dark /><Chevron dark /></ArrowStack>
          <CommandLine>Команда:<CommandInput type="text" /></CommandLine>
          <ArrowStack><SpinArrows /></ArrowStack>
        </CommandArea>
        <TabStrip>
          {tabs.map((t) => <ToolTab key={t} $active={t === "Видовые окна"}>{t}</ToolTab>)}
          <GearButton aria-label="Параметры"><Gear /></GearButton>
        </TabStrip>
        <Toolbar>
          {toolGroups.map((g, i) => (
            <ToolGroup key={i}>
              {g.map((b) => <ToolButton key={b.label} $narrow={b.narrow} aria-label={b.label}>{b.icon}</ToolButton>)}
            </ToolGroup>
          ))}
        </Toolbar>
        <Workspace>
          <SideTools>
            {sideIcons.map(([label, d]) => (
              <ToolButton key={label} aria-label={label}><Ico>{d}</Ico></ToolButton>
            ))}
          </SideTools>
          <ViewportFrame>
            <SceneDrawing />
            <BlackStrip />
            <ViewportTab>
              Перспектива
              <svg width="6" height="7" viewBox="0 0 6 7"><path d="M.5 0v7" stroke="#5068b8" /><path d="M2 2.500h4L4 5z" fill="#222c50" /></svg>
            </ViewportTab>
          </ViewportFrame>
          <Panel>
            <PanelTitle>Визуализация</PanelTitle>
            <PanelTabs>
              {panelTabs.map(([label, icon]) => (
                <PanelTab key={label} aria-label={label} $active={label === "Визуализация"}>{icon}</PanelTab>
              ))}
              <GearButton aria-label="Параметры панели"><Gear c="#b9bfd6" /></GearButton>
            </PanelTabs>
            <PanelBody>
              <Form>
                <Head>Текущий визулизатор</Head>
                <Row $h={20}><Dropdown label="Визуализатор" value="Rhino Render" tone="grey" pad={11} lead={<svg width="9" height="9" viewBox="0 0 9 9"><path d="M0 4.500 3 2l1-2 1 1.500L8 1 7 4.500 8 8l-3-.5L4 9 3 7z" fill="#222" /></svg>} /></Row>
                <Head gap={4}>Вид</Head>
                <Row $h={18}><Dropdown label="Вид" value="Текущее видовое окно" tone="grey" pad={11} lead={<svg width="9" height="8" viewBox="0 0 9 8"><path d="M1 .5h7.500v7H1z" fill="#8d8e92" stroke="#666" /><path d="M1 1.500h7" stroke="#bbb" /></svg>} /></Row>
                <Head gap={11}>Разрешение и качество</Head>
                <Row $indent={6}><label htmlFor="sizes">Размеры:</label><Dropdown id="sizes" value="Видовое окно (1435 x 820)" /></Row>
                <Row $h={12} $indent={10}><Choice $muted><Tick type="checkbox" />Сохранить пропорции видового окна (1.75:1)</Choice></Row>
                <Row>
                  <label htmlFor="w">Размер:</label>
                  <Spin><input id="w" defaultValue="1435" /><SpinArrows /></Spin>
                  x
                  <Spin><input aria-label="Высота" defaultValue="820" /><SpinArrows /></Spin>
                  <Dropdown label="Единицы" value="пикселей" w={51} />
                </Row>
                <Row><label htmlFor="dpi">DPI:</label><Spin $white><input id="dpi" defaultValue="72" /><SpinArrows /></Spin></Row>
                <Row $indent={6}><label htmlFor="quality">Качество:</label><Dropdown id="quality" value="Черновое" w={66} /></Row>
                <Head gap={5}>Фон</Head>
                <Row>
                  <Choice $w={73}><Tick type="radio" name="bg" defaultChecked />Сплошной цвет</Choice>
                  <ColorField aria-label="Цвет фона" />
                  <ColorArrow type="button" aria-label="Выбрать цвет"><Chevron /></ColorArrow>
                </Row>
                <Row $h={12}><Choice><Tick type="radio" name="bg" />Градиент</Choice></Row>
                <Row $h={12}><Choice><Tick type="radio" name="bg" />Окружение 360°</Choice></Row>
                <Row $h={20} $indent={18}><Dropdown label="Окружение" value="Без окружения" tone="dim" tall pad={41} lead={<Swatch />} /></Row>
                <Row $h={14}><Choice><Tick type="radio" name="bg" />Фоновое изображение</Choice></Row>
                <Row $h={14} $gap={6}><Choice><Tick type="checkbox" />Прозрачный фон</Choice></Row>
                <Row $gap={2}>
                  <Choice $w={73}><Tick type="checkbox" defaultChecked />Плоскость основания</Choice>
                  <PushButton type="button">
                    <svg width="10" height="10" viewBox="0 0 10 10"><path d="M0 5h9v4H0z" fill="#4fa59c" stroke="#2b6660" /><path d="M4 3h4M7 1v4" stroke="#444" /></svg>
                    <span>Настройки...</span>
                  </PushButton>
                </Row>
                <Row><Choice><Tick type="checkbox" defaultChecked />Использовать пользовательское окружение для отражен...</Choice></Row>
                <Row $h={20} $indent={18}><Dropdown label="Окружение отражений" value="Без окружения" tone="white" tall pad={41} lead={<Swatch $dark />} /></Row>
                <Head gap={7}>Освещение</Head>
                <Row $gap={1}>
                  <Choice $w={50}><Tick type="checkbox" />Солнце</Choice>
                  <PushButton type="button">
                    <svg width="8" height="8" viewBox="0 0 8 8"><path d="M4 0v8M0 4h8M1 1l6 6M7 1 1 7" stroke="#8c4a1a" /><circle cx="4" cy="4" r="2.500" fill="#ef7a1e" /><circle cx="4" cy="4" r="1" fill="#d3281d" /></svg>
                    <span>Параметры солнечного света...</span>
                  </PushButton>
                </Row>
              </Form>
              <Scrollbar>
                <button type="button" aria-label="Вверх"><Chevron up dark /></button>
                <Thumb />
                <button type="button" aria-label="Вниз"><Chevron dark /></button>
              </Scrollbar>
            </PanelBody>
            <PanelFooter>
              <PushButton $w={79} $h={16}>
                <svg width="13" height="11" viewBox="0 0 13 11" fill="none" stroke="#d8402f" strokeWidth="1.300"><path d="M1.500 1h3.500L4.500 10H1zM8 1h3.500L11 10H7.500z" /></svg>
                <span>По умолчанию</span>
              </PushButton>
              <PushButton $w={52} $h={16}>
                <svg width="11" height="11" viewBox="0 0 11 11"><circle cx="5.500" cy="5.500" r="5" fill="#1c46b4" stroke="#111f55" /><circle cx="4" cy="4" r="2" fill="#7fa4f2" /><circle cx="3.500" cy="3.500" r="1" fill="#fff" /></svg>
                <span>Визуализа...</span>
              </PushButton>
            </PanelFooter>
          </Panel>
        </Workspace>
        <SnapBar>
          {snaps.map((s, i) => (
            <Choice key={s}><Tick type="checkbox" defaultChecked={i < 11} disabled={i >= 11} />{s}</Choice>
          ))}
        </SnapBar>
        <StatusBar>
          <StatusCell>РПлоскость</StatusCell>
          <StatusCell>x -28.87</StatusCell>
          <StatusCell>y 776.75</StatusCell>
          <StatusCell>z</StatusCell>
          <StatusCell>Миллиметры</StatusCell>
          <StatusCell $start><LayerChip />По умолчанию</StatusCell>
          <StatusCell>Привязка к сетке</StatusCell>
          <StatusCell>Орто</StatusCell>
          <StatusCell>Плоский режим</StatusCell>
          <StatusCell $on>Привязка</StatusCell>
          <StatusCell>Трассировка</StatusCell>
          <StatusCell $on>Gumball</StatusCell>
          <StatusCell>Запись истории</StatusCell>
          <StatusCell>Фильтр</StatusCell>
          <StatusCell $start>Абсолютный допуск: 0.01</StatusCell>
        </StatusBar>
        <Taskbar>
          <StartButton aria-label="Пуск">
            <svg width="9" height="9" viewBox="0 0 9 9" fill="#fff"><path d="M0 1.300 4 .7v3.600H0zM4.500.6 9 0v4.300H4.500zM0 4.800h4v3.500L0 7.700zM4.500 4.800H9V9l-4.500-.6z" /></svg>
          </StartButton>
          <TaskApps>
            {tasks.map((t) => (
              <TaskButton key={t.label} $icon={t.only} $active={t.active} aria-label={t.label}>
                {t.icon}
                {!t.only && t.label}
              </TaskButton>
            ))}
          </TaskApps>
          <Tray>
            {tray.map((icon, i) => <React.Fragment key={i}>{icon}</React.Fragment>)}
            <span>РУС</span>
            <Clock>11:08</Clock>
          </Tray>
        </Taskbar>
      </Page>
    </>
  );
}
